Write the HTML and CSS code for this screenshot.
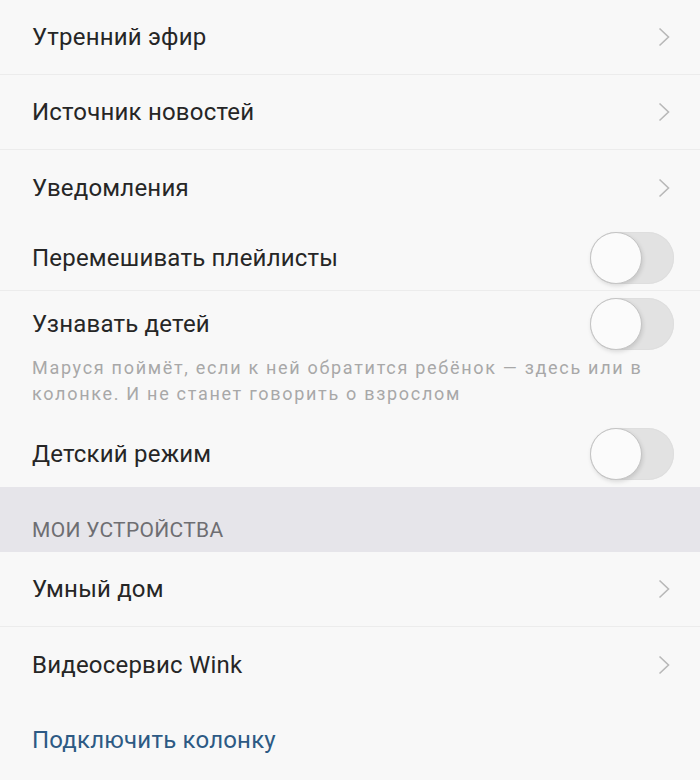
FILE: index.html
```html
<!DOCTYPE html>
<html lang="ru">
<head>
    <meta charset="UTF-8">
    <meta name="viewport" content="width=device-width, initial-scale=1.0">
    <title>Настройки</title>
    <link rel="stylesheet" href="styles.css">
</head>
<body>

<div class="settings">
    <div class="row line">
        <span class="label">Утренний эфир</span>
        <svg class="chevron" viewBox="0 0 12 20"><path d="M1.5 1.5 L10.5 10 L1.5 18.5"/></svg>
    </div>
    <div class="row line">
        <span class="label">Источник новостей</span>
        <svg class="chevron" viewBox="0 0 12 20"><path d="M1.5 1.5 L10.5 10 L1.5 18.5"/></svg>
    </div>
    <div class="row">
        <span class="label">Уведомления</span>
        <svg class="chevron" viewBox="0 0 12 20"><path d="M1.5 1.5 L10.5 10 L1.5 18.5"/></svg>
    </div>
    <div class="row row-toggle line">
        <span class="label">Перемешивать плейлисты</span>
        <span class="toggle"><span class="knob"></span></span>
    </div>
    <div class="row row-kids">
        <span class="label">Узнавать детей</span>
        <span class="toggle"><span class="knob"></span></span>
    </div>
    <p class="hint">Маруся поймёт, если к ней обратится ребёнок — здесь или в колонке. И не станет говорить о взрослом</p>
    <div class="row row-toggle">
        <span class="label">Детский режим</span>
        <span class="toggle"><span class="knob"></span></span>
    </div>

    <div class="section-title">МОИ УСТРОЙСТВА</div>

    <div class="row line">
        <span class="label">Умный дом</span>
        <svg class="chevron" viewBox="0 0 12 20"><path d="M1.5 1.5 L10.5 10 L1.5 18.5"/></svg>
    </div>
    <div class="row">
        <span class="label">Видеосервис Wink</span>
        <svg class="chevron" viewBox="0 0 12 20"><path d="M1.5 1.5 L10.5 10 L1.5 18.5"/></svg>
    </div>
    <div class="row">
        <span class="label link">Подключить колонку</span>
    </div>
</div>

</body>
</html>
```

FILE: styles.css
```css
body {
    margin: 0;
    background-color: #f8f8f8;
    font-family: Roboto, "Noto Sans", sans-serif;
    color: #262626;
}

.settings {
    width: 700px;
    height: 780px;
    overflow: hidden;
}

.row {
    display: flex;
    align-items: center;
    justify-content: space-between;
    height: 75px;
    padding: 0 28px 0 32px;
    box-sizing: border-box;
}

.line {
    border-bottom: 1px solid #ececec;
}

.label {
    font-size: 24px;
    letter-spacing: 0.2px;
}

.link {
    color: #2d5a84;
}

.chevron {
    width: 12px;
    height: 20px;
    margin-right: 2px;
    fill: none;
    stroke: #b8b8b8;
    stroke-width: 1.6;
}

.row-toggle {
    height: 66px;
    padding-right: 26px;
}

.row-kids {
    height: 64px;
    padding-right: 26px;
    padding-top: 2px;
}

.toggle {
    position: relative;
    width: 84px;
    height: 52px;
    border-radius: 26px;
    background-color: #e2e2e2;
    box-shadow: inset 0 0 0 1px #dedede;
}

.knob {
    position: absolute;
    left: 0;
    top: 0;
    width: 52px;
    height: 52px;
    box-sizing: border-box;
    border-radius: 50%;
    background-color: #fbfbfb;
    border: 1px solid #c4c4c4;
    box-shadow: 1px 2px 4px rgba(0, 0, 0, 0.12);
}

.hint {
    margin: 0;
    padding: 0 26px 14px 32px;
    font-size: 18px;
    letter-spacing: 1.7px;
    line-height: 26px;
    color: #a8a8a8;
}

.section-title {
    height: 65px;
    box-sizing: border-box;
    padding: 31px 32px 0;
    background-color: #e6e5ea;
    font-size: 21px;
    color: #6e6e72;
    letter-spacing: 0.3px;
}
```
